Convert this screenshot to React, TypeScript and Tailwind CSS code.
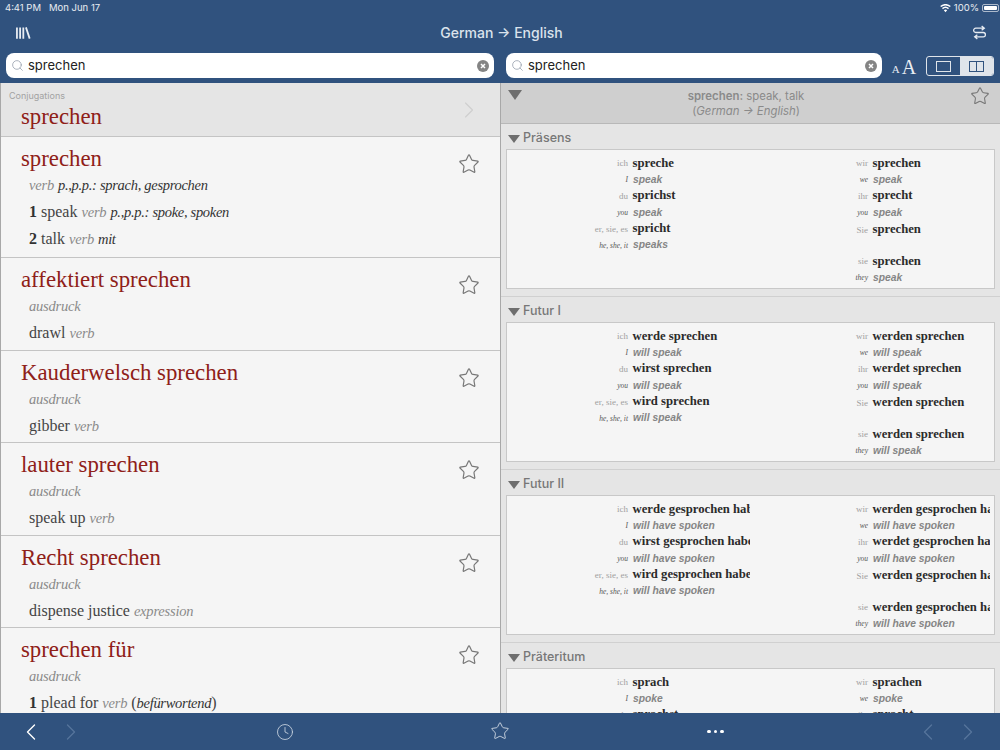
import { ChevronLeft, ChevronRight, Clock, Search, Star } from "lucide-react";

const sans = "font-['Liberation_Sans',Arial,sans-serif]";
const ui = "font-['Inter',sans-serif]";
const serif = "font-['Liberation_Serif','Times_New_Roman',serif]";

type Form = { p: string; en: string; de: string; mt?: string; w?: string };

const pron = {
  left: [["ich", "I"], ["du", "you"], ["er, sie, es", "he, she, it"]],
  right: [["wir", "we"], ["ihr", "you"], ["Sie", ""], ["sie", "they"]],
};

const tenses = [
  {
    name: "Präsens",
    left: ["spreche", "sprichst", "spricht"],
    leftEn: ["speak", "speak", "speaks"],
    right: ["sprechen", "sprecht", "sprechen", "sprechen"],
    rightEn: ["speak", "speak", "", "speak"],
  },
  {
    name: "Futur I",
    left: ["werde sprechen", "wirst sprechen", "wird sprechen"],
    leftEn: ["will speak", "will speak", "will speak"],
    right: ["werden sprechen", "werdet sprechen", "werden sprechen", "werden sprechen"],
    rightEn: ["will speak", "will speak", "", "will speak"],
  },
  {
    name: "Futur II",
    left: ["werde gesprochen haben", "wirst gesprochen haben", "wird gesprochen haben"],
    leftEn: ["will have spoken", "will have spoken", "will have spoken"],
    right: ["werden gesprochen haben", "werdet gesprochen haben", "werden gesprochen haben", "werden gesprochen haben"],
    rightEn: ["will have spoken", "will have spoken", "", "will have spoken"],
  },
  {
    name: "Präteritum",
    left: ["sprach", "sprachst", "sprach"],
    leftEn: ["spoke", "spoke", "spoke"],
    right: ["sprachen", "spracht", "sprachen", "sprachen"],
    rightEn: ["spoke", "spoke", "", "spoke"],
  },
];

function ClearIcon() {
  return (
    <svg viewBox="0 0 12 12" className="size-3 shrink-0">
      <circle cx="6" cy="6" r="6" fill="#848484" />
      <path d="M4 4l4 4M8 4l-4 4" stroke="#fff" strokeWidth="1.5" />
    </svg>
  );
}

function SearchBox({ width }: { width: string }) {
  return (
    <div className={`${width} h-[25px] shrink-0 bg-white rounded-lg flex items-center pl-[5px] pr-[5px]`}>
      <Search className="size-[13px] text-gray-400 shrink-0" strokeWidth={1.5} />
      <span className={`${ui} ml-[4px] flex-1 text-[13px] text-[#222]`}>sprechen</span>
      <ClearIcon />
    </div>
  );
}

function StatusBar() {
  return (
    <div className={`${ui} h-[15px] pt-[1px] flex items-center justify-between pl-[5px] pr-[1px] text-[9.5px] text-white/90`}>
      <div className="flex gap-2">
        <span>4:41 PM</span>
        <span>Mon Jun 17</span>
      </div>
      <div className="flex items-center gap-[3px]">
        <svg viewBox="0 0 16 12" className="w-[11px] h-[9px]" fill="white">
          <path d="M8 11.5 5.6 8.6a3.6 3.6 0 0 1 4.8 0ZM4.3 7.1 2.9 5.4a7.6 7.6 0 0 1 10.2 0l-1.4 1.7a5.5 5.5 0 0 0-7.4 0ZM1.7 3.9.3 2.3a11.6 11.6 0 0 1 15.4 0l-1.4 1.6a9.5 9.5 0 0 0-12.6 0Z" />
        </svg>
        <span>100%</span>
        <div className="w-[17px] h-[8px] rounded-[2px] border border-white/60 p-[1px]">
          <div className="w-full h-full bg-white rounded-[1px]" />
        </div>
      </div>
    </div>
  );
}

function Header() {
  return (
    <div className="bg-[#30527e] h-[83px] shrink-0">
      <StatusBar />
      <div className="h-[38px] flex items-center justify-between pl-[16px] pr-[13px] pb-[3px]">
        <svg viewBox="0 0 16 14" className="w-[15px] h-[14px]" fill="none" stroke="#e8edf3" strokeWidth="1.9">
          <path d="M1 1v12M4.4 1v12M7.8 1v12M10.6 1l4 12" />
        </svg>
        <span className={`${ui} text-[14px] font-medium text-[#dbe3ec]`}>German → English</span>
        <svg viewBox="0 0 14 14" className="w-[15px] h-[15px]" fill="none" stroke="#e8edf3" strokeWidth="1.2">
          <path d="M9 1l2.5 2L9 5M11.5 3H3.5a2 2 0 0 0 0 4h7a2 2 0 0 1 0 4H2.5M5 9l-2.5 2L5 13" />
        </svg>
      </div>
      <div className="h-[25px] flex items-center pl-[6px] pr-[6px]">
        <SearchBox width="w-[488px]" />
        <div className="w-[12px] shrink-0" />
        <SearchBox width="w-[376px]" />
        <div className={`${serif} w-[44px] h-[25px] leading-none flex items-end justify-center text-[#e8edf3] pb-[3px]`}>
          <span className="text-[11px] mr-[2px]">A</span>
          <span className="text-[20px] leading-[20px] -mb-[2px]">A</span>
        </div>
        <div className="w-[68px] h-[20px] ml-auto mt-[1px] flex rounded-[3px] border border-[#dfe4ea] overflow-hidden">
          <div className="w-[33px] flex items-center justify-center">
            <div className="w-[15px] h-[11px] border border-[#dfe4ea]" />
          </div>
          <div className="flex-1 bg-[#dfe4ea] flex items-center justify-center">
            <div className="w-[15px] h-[11px] border border-[#30527e] flex justify-center">
              <div className="w-px h-full bg-[#30527e]" />
            </div>
          </div>
        </div>
      </div>
    </div>
  );
}

function Pos({ children }: { children: string }) {
  return <i className="text-[#8a8a8a] text-[14.5px] tracking-[-0.2px]">{children}</i>;
}

function Note({ children }: { children: string }) {
  return <i className="text-[#333] text-[14.5px] tracking-[-0.3px]">{children}</i>;
}

function Line({ children }: { children: React.ReactNode }) {
  return <div className="h-[27px] pl-[8px] leading-[27px] text-[16px] text-[#444] whitespace-nowrap">{children}</div>;
}

function Num({ children }: { children: string }) {
  return <b className="text-[#333] mr-[4px]">{children}</b>;
}

function Entry({ title, height, children }: { title: string; height: string; children: React.ReactNode }) {
  return (
    <div className={`${height} ${serif} shrink-0 bg-[#f5f5f5] border-b border-[#c4c4c4] flex pl-[20px] pt-[9px] pr-[20px] overflow-hidden`}>
      <div className="flex-1 min-w-0">
        <div className="h-[25px] leading-[25px] text-[22.8px] text-[#8f2018] whitespace-nowrap">{title}</div>
        {children}
      </div>
      <Star className="size-[22px] mt-[7px] text-[#777]" strokeWidth={1.3} />
    </div>
  );
}

function LeftPane() {
  return (
    <div className="w-[501px] shrink-0 border-l border-r border-[#a8a8a8] flex flex-col overflow-hidden">
      <div className="h-[54px] shrink-0 bg-[#e5e5e5] border-b border-[#c4c4c4] flex items-center pr-[17px]">
        <div className="flex-1 pl-[8px]">
          <div className={`${ui} text-[9px] text-[#a2a2a2] leading-[12px]`}>Conjugations</div>
          <div className={`${serif} pl-[12px] pt-[2px] text-[22.8px] leading-[26px] text-[#8f2018]`}>sprechen</div>
        </div>
        <ChevronRight className="size-[28px] text-[#cfcfcf]" strokeWidth={1} />
      </div>
      <Entry title="sprechen" height="h-[121px]">
        <Line><Pos>verb</Pos> <Note>p.,p.p.: sprach, gesprochen</Note></Line>
        <Line><Num>1</Num>speak <Pos>verb</Pos> <Note>p.,p.p.: spoke, spoken</Note></Line>
        <Line><Num>2</Num>talk <Pos>verb</Pos> <Note>mit</Note></Line>
      </Entry>
      <Entry title="affektiert sprechen" height="h-[92.6px]">
        <Line><Pos>ausdruck</Pos></Line>
        <Line>drawl <Pos>verb</Pos></Line>
      </Entry>
      <Entry title="Kauderwelsch sprechen" height="h-[92.6px]">
        <Line><Pos>ausdruck</Pos></Line>
        <Line>gibber <Pos>verb</Pos></Line>
      </Entry>
      <Entry title="lauter sprechen" height="h-[92.6px]">
        <Line><Pos>ausdruck</Pos></Line>
        <Line>speak up <Pos>verb</Pos></Line>
      </Entry>
      <Entry title="Recht sprechen" height="h-[92.6px]">
        <Line><Pos>ausdruck</Pos></Line>
        <Line>dispense justice <Pos>expression</Pos></Line>
      </Entry>
      <Entry title="sprechen für" height="h-[121px]">
        <Line><Pos>ausdruck</Pos></Line>
        <Line><Num>1</Num>plead for <Pos>verb</Pos> (<Note>befürwortend</Note>)</Line>
      </Entry>
    </div>
  );
}

function PronounRow({ f, pronounWidth }: { f: Form; pronounWidth: string }) {
  return (
    <div className={f.mt}>
      <div className="h-[16.4px] flex items-center">
        <span className={`${pronounWidth} ${serif} shrink-0 text-right text-[9px] text-[#a0a0a0] pt-[2px]`}>{f.p}</span>
        <span className={`${serif} ml-[4.5px] text-[12.7px] font-bold text-[#2b2b2b] whitespace-nowrap`}>{f.de}</span>
      </div>
      {f.en && (
        <div className="h-[16.4px] flex items-center">
          <span className={`${pronounWidth} ${serif} shrink-0 text-right text-[7.5px] italic text-[#555] pt-[1px]`}>{f.w}</span>
          <span className={`${sans} ml-[5px] text-[10.3px] italic font-bold text-[#858585] whitespace-nowrap`}>{f.en}</span>
        </div>
      )}
    </div>
  );
}

function Section({ t }: { t: (typeof tenses)[number] }) {
  const left: Form[] = t.left.map((de, i) => ({ p: pron.left[i][0], w: pron.left[i][1], de, en: t.leftEn[i] }));
  const right: Form[] = t.right.map((de, i) => ({
    p: pron.right[i][0],
    w: pron.right[i][1],
    de,
    en: t.rightEn[i],
    mt: i === 2 ? "mt-[1px]" : i === 3 ? "mt-[15px]" : undefined,
  }));
  return (
    <div className="h-[173px] shrink-0 border-b border-[#d0d0d0] px-[5px]">
      <div className="h-[25px] flex items-center pl-[2px] pt-[4px]">
        <div className="w-0 h-0 border-l-[6px] border-r-[6px] border-t-[8px] border-l-transparent border-r-transparent border-t-[#6e6e6e]" />
        <span className={`${ui} ml-[3px] text-[12.5px] font-medium text-[#777]`}>{t.name}</span>
      </div>
      <div className="h-[140px] bg-[#f5f5f5] border border-[#c8c8c8] flex pt-[5px]">
        <div className="w-[243px] overflow-hidden">
          {left.map((f, i) => (
            <PronounRow key={i} f={f} pronounWidth="w-[121px]" />
          ))}
        </div>
        <div className="w-[240px] overflow-hidden">
          {right.map((f, i) => (
            <PronounRow key={i} f={f} pronounWidth="w-[118px]" />
          ))}
        </div>
      </div>
    </div>
  );
}

function RightPane() {
  return (
    <div className="flex-1 min-w-0 bg-[#e5e5e5] flex flex-col overflow-hidden">
      <div className="h-[41px] shrink-0 bg-[#cfcfcf] border-b border-[#b8b8b8] flex pl-[7px] pr-[10px] pt-[6px]">
        <div className="w-0 h-0 mt-[1px] border-l-[7px] border-r-[7px] border-t-[10px] border-l-transparent border-r-transparent border-t-[#6e6e6e]" />
        <div className={`${ui} flex-1 text-center text-[11.4px] leading-[14.5px] text-[#8a8a8a]`}>
          <div><span className="font-semibold">sprechen:</span> speak, talk</div>
          <div>(<i>German → English</i>)</div>
        </div>
        <Star className="size-[20px] -mt-[3px] text-[#777]" strokeWidth={1.3} />
      </div>
      {tenses.map((t) => (
        <Section key={t.name} t={t} />
      ))}
    </div>
  );
}

function Footer() {
  return (
    <div className="relative h-[37px] shrink-0 bg-[#30527e] flex items-center justify-between">
      <div className="w-[500px] flex items-center pl-[17px]">
        <ChevronLeft className="size-[28px] text-white" strokeWidth={1.2} />
        <ChevronRight className="size-[28px] ml-[12px] text-[#55749b]" strokeWidth={1.2} />
        <Clock className="size-[18px] ml-[191px] text-[#cfd8e3]" strokeWidth={1.1} />
      </div>
      <Star className="absolute left-[490px] top-[8px] size-[20px] text-[#cfd8e3]" strokeWidth={1.1} />
      <div className="flex-1 flex items-center pl-[207px] pr-[18px]">
        <div className="flex gap-[3px]">
          <div className="size-[3.5px] rounded-full bg-white" />
          <div className="size-[3.5px] rounded-full bg-white" />
          <div className="size-[3.5px] rounded-full bg-white" />
        </div>
        <ChevronLeft className="size-[28px] ml-auto text-[#55749b]" strokeWidth={1.2} />
        <ChevronRight className="size-[28px] ml-[12px] text-[#55749b]" strokeWidth={1.2} />
      </div>
    </div>
  );
}

export default function App() {
  return (
    <div className="w-[1000px] h-[750px] flex flex-col overflow-hidden bg-white">
      <Header />
      <div className="flex-1 min-h-0 flex">
        <LeftPane />
        <RightPane />
      </div>
      <Footer />
    </div>
  );
}
